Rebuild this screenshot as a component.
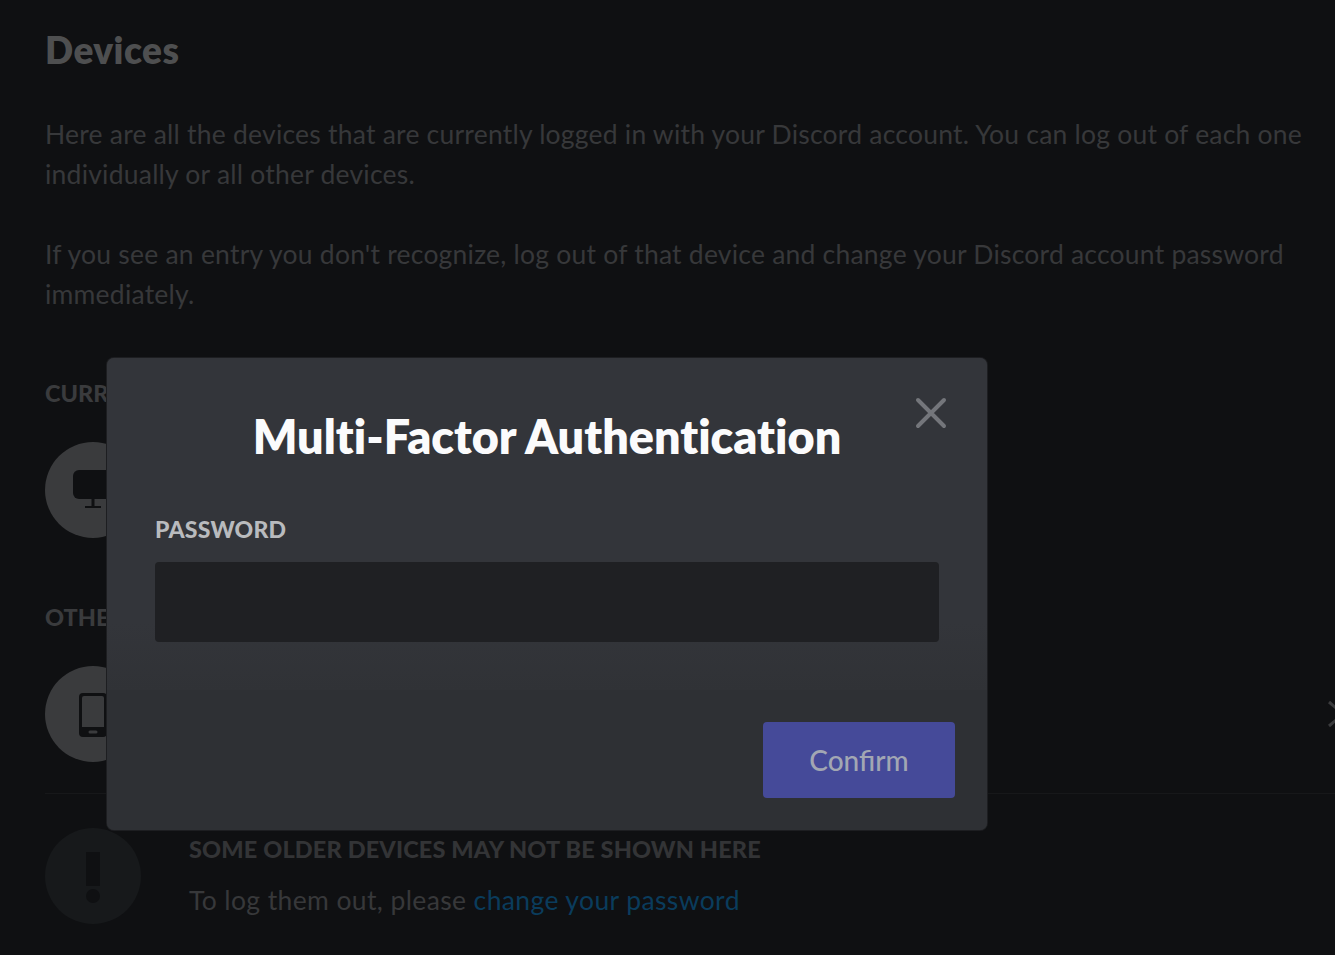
<div class="page">
  <h1>Devices</h1>
  <p class="copy">Here are all the devices that are currently logged in with your Discord account. You can log out of each one individually or all other devices.</p>
  <p class="copy second">If you see an entry you don't recognize, log out of that device and change your Discord account password immediately.</p>

  <h2 class="current">CURRENT DEVICE</h2>
  <div class="row">
    <div class="disc">
      <svg width="48" height="48" viewBox="0 0 48 48"><rect x="4" y="4" width="40" height="29" rx="6" fill="#0f1012"/><path d="M22.500 33h3v7h6.500v2H16v-2h6.500z" fill="#0f1012"/></svg>
    </div>
  </div>

  <h2 class="other">OTHER DEVICES</h2>
  <div class="row">
    <div class="disc">
      <svg width="48" height="48" viewBox="0 0 48 48"><path fill-rule="evenodd" d="M14 3h20a4 4 0 0 1 4 4v36a4 4 0 0 1-4 4H14a4 4 0 0 1-4-4V7a4 4 0 0 1 4-4zm-1 5v29h22V8a2 2 0 0 0-2-2H15a2 2 0 0 0-2 2zm8 32.500a1.500 1.500 0 0 0 0 3h6a1.500 1.500 0 0 0 0-3z" fill="#0f1012"/></svg>
    </div>
    <svg class="remove" width="24" height="32" viewBox="0 0 24 32"><path d="M4 4l14 12L4 28" fill="none" stroke="#3a3b3d" stroke-width="3"/></svg>
  </div>

  <div class="divider"></div>

  <div class="notice">
    <div class="disc dim">
      <svg width="48" height="72" viewBox="0 0 48 72"><rect x="17" y="12" width="14" height="34" fill="#0f1012"/><circle cx="24" cy="56" r="7" fill="#0f1012"/></svg>
    </div>
    <div class="notice-text">
      <h3>SOME OLDER DEVICES MAY NOT BE SHOWN HERE</h3>
      <p>To log them out, please <a href="#top">change your password</a></p>
    </div>
  </div>
</div>

<div class="modal" role="dialog" aria-label="Multi-Factor Authentication">
  <div class="body">
    <h4>Multi-Factor Authentication</h4>
    <button class="close" aria-label="Close">
      <svg width="32" height="32" viewBox="0 0 32 32"><path d="M3 3l26 26M29 3L3 29" stroke="#74767b" stroke-width="4" stroke-linecap="round"/></svg>
    </button>
    <label for="pw">PASSWORD</label>
    <input id="pw" type="password" />
  </div>
  <div class="foot">
    <button class="confirm">Confirm</button>
  </div>
</div>

<style>
  :global(html), :global(body) {
    margin: 0;
    height: 955px;
    overflow: hidden;
    background: #0f1012;
  }
  .page {
    box-sizing: border-box;
    width: 1335px;
    height: 955px;
    padding: 27px 0 0 45px;
    overflow: hidden;
    font-family: Lato, "Noto Sans", sans-serif;
    font-variant-ligatures: none;
  }
  h1 {
    margin: 0;
    font-size: 37px;
    line-height: 46px;
    font-weight: 800;
    letter-spacing: 0.45px;
    color: #4e4f50;
  }
  .copy {
    width: 1275px;
    margin: 41px 0 0;
    font-size: 26.500px;
    line-height: 40px;
    letter-spacing: 0.22px;
    color: #37383a;
  }
  .copy.second {
    margin-top: 40px;
  }
  h2 {
    margin: 0;
    font-size: 23.500px;
    line-height: 30px;
    font-weight: 900;
    color: #3a3b3d;
  }
  .current { margin-top: 64px; }
  .other { margin-top: 64px; }
  .row {
    display: flex;
    justify-content: space-between;
    align-items: center;
    margin-top: 34px;
  }
  .remove {
    margin-right: -14px;
  }
  .disc {
    width: 96px;
    height: 96px;
    flex: none;
    border-radius: 50%;
    background: #3a3b3d;
    display: flex;
    align-items: center;
    justify-content: center;
  }
  .disc.dim { background: #17191b; }
  .divider {
    height: 1px;
    margin-top: 31px;
    background: #17181a;
  }
  .notice {
    display: flex;
    gap: 48px;
    margin-top: 34px;
  }
  .notice-text { margin-top: 6px; }
  h3 {
    margin: 0;
    font-size: 23.500px;
    line-height: 30px;
    font-weight: 900;
    letter-spacing: 0.15px;
    color: #333436;
  }
  .notice-text p {
    margin: 19px 0 0;
    font-size: 26.500px;
    line-height: 34px;
    letter-spacing: 0.38px;
    color: #37383a;
  }
  a {
    color: #0a3c5c;
    text-decoration: none;
  }
  .modal {
    position: absolute;
    left: 107px;
    top: 358px;
    width: 880px;
    height: 472px;
    border-radius: 7px;
    overflow: hidden;
    display: flex;
    flex-direction: column;
    background: #2e3034;
    box-shadow: 0 0 0 1px #1d1e21;
    font-family: Lato, "Noto Sans", sans-serif;
    font-variant-ligatures: none;
  }
  .body {
    position: relative;
    box-sizing: border-box;
    height: 332px;
    padding: 0 48px;
    background: linear-gradient(#33353a, #33353a 80%, #303236);
    display: flex;
    flex-direction: column;
  }
  h4 {
    margin: 51px 0 0;
    font-size: 46.700px;
    line-height: 54px;
    font-weight: 800;
    text-align: center;
    color: #fbfbfc;
  }
  .close {
    position: absolute;
    right: 40px;
    top: 39px;
    width: 32px;
    height: 32px;
    padding: 0;
    border: 0;
    background: none;
  }
  label {
    margin-top: 51px;
    font-size: 23px;
    line-height: 30px;
    font-weight: 900;
    letter-spacing: 0.2px;
    color: #b9bbbe;
  }
  input {
    box-sizing: border-box;
    height: 80px;
    margin-top: 18px;
    border: 0;
    border-radius: 4px;
    background: #1f2023;
  }
  .foot {
    flex: 1;
    display: flex;
    justify-content: flex-end;
    align-items: flex-start;
    padding: 32px 32px 0 0;
    background: #2e3034;
  }
  .confirm {
    width: 192px;
    height: 76px;
    border: 0;
    border-radius: 4px;
    background: #454a99;
    color: #a2a7b3;
    font: 500 28px Lato, "Noto Sans", sans-serif;
  }
</style>
